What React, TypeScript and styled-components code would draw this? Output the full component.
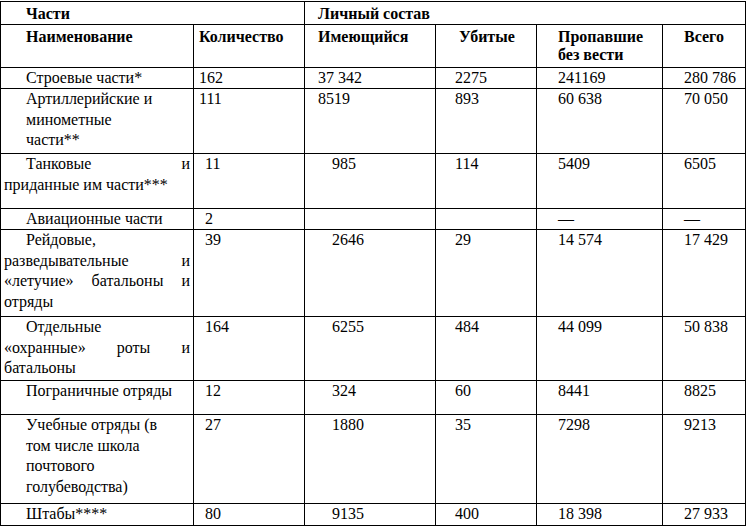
import React from "react";
import styled, { createGlobalStyle } from "styled-components";

type NameCell = {
  lines: string[];
  // "first": only the first line is indented, "all": whole paragraph is indented
  indent: "first" | "all";
  justify?: boolean;
};

type Num = { v: string; indent: number };

type Row = {
  height: number;
  name: NameCell;
  nums: Num[];
};

const n = (v: string, indent: number): Num => ({ v, indent });

// left padding of each numeric column (count, present, killed, missing, total)
const colPad = [5, 13, 19, 2, 21];

const rows: Row[] = [
  {
    height: 20,
    name: { lines: ["Строевые части*"], indent: "all" },
    nums: [n("162", 0), n("37 342", 0), n("2275", 0), n("241169", 19), n("280 786", 0)],
  },
  {
    height: 64,
    name: { lines: ["Артиллерийские и", "минометные", "части**"], indent: "all" },
    nums: [n("111", 0), n("8519", 0), n("893", 0), n("60 638", 19), n("70 050", 0)],
  },
  {
    height: 54,
    name: { lines: ["Танковые и", "приданные им части***"], indent: "first", justify: true },
    nums: [n("11", 6), n("985", 14), n("114", 0), n("5409", 19), n("6505", 0)],
  },
  {
    height: 20,
    name: { lines: ["Авиационные части"], indent: "first" },
    nums: [n("2", 6), n("", 14), n("", 0), n("—", 19), n("—", 0)],
  },
  {
    height: 86,
    name: {
      lines: ["Рейдовые,", "разведывательные и", "«летучие» батальоны и", "отряды"],
      indent: "first",
      justify: true,
    },
    nums: [n("39", 6), n("2646", 14), n("29", 0), n("14 574", 19), n("17 429", 0)],
  },
  {
    height: 63,
    name: {
      lines: ["Отдельные", "«охранные» роты и", "батальоны"],
      indent: "first",
      justify: true,
    },
    nums: [n("164", 6), n("6255", 14), n("484", 0), n("44 099", 19), n("50 838", 0)],
  },
  {
    height: 33,
    name: { lines: ["Пограничные отряды"], indent: "first" },
    nums: [n("12", 6), n("324", 14), n("60", 0), n("8441", 19), n("8825", 0)],
  },
  {
    height: 88,
    name: {
      lines: ["Учебные отряды (в", "том числе школа", "почтового", "голубеводства)"],
      indent: "all",
    },
    nums: [n("27", 6), n("1880", 14), n("35", 0), n("7298", 19), n("9213", 0)],
  },
  {
    height: 21,
    name: { lines: ["Штабы****"], indent: "all" },
    nums: [n("80", 6), n("9135", 14), n("400", 0), n("18 398", 19), n("27 933", 0)],
  },
];

const serif = `"Liberation Serif", "Times New Roman", serif`;

const GlobalStyle = createGlobalStyle`
  html, body {
    margin: 0;
    padding: 0;
    background: #fff;
    font-family: ${serif};
  }
`;

const Page = styled.div`
  padding-top: 1px;
  width: 746px;
`;

// 1px black gaps between white cells draw the table rules
const Grid = styled.div<{ $rows: string }>`
  display: grid;
  grid-template-columns: 192px 110px 130px 100px 125px 82px;
  grid-template-rows: ${(p) => p.$rows};
  gap: 1px;
  padding: 1px;
  width: 746px;
  box-sizing: border-box;
  background: #000;
  font-family: ${serif};
  font-size: 16px;
  color: #000;
`;

const Head = styled.div<{ $span?: number; $pad: number; $indent?: number }>`
  grid-column: span ${(p) => p.$span ?? 1};
  background: #fff;
  padding: 3px 2px 0 ${(p) => p.$pad}px;
  font-weight: bold;
  line-height: 18px;
  text-indent: ${(p) => p.$indent ?? 0}px;
  white-space: nowrap;
`;

const SubLine = styled.span`
  display: block;
`;

const Cell = styled.div<{ $pad: number; $indent: number }>`
  background: #fff;
  padding: 0 2px 0 ${(p) => p.$pad}px;
  line-height: 20.7px;
  text-indent: ${(p) => p.$indent}px;
  white-space: nowrap;
`;

const NameBox = styled.div<{ $all: boolean }>`
  background: #fff;
  padding: 0 3px 0 ${(p) => (p.$all ? 25 : 3)}px;
  line-height: 20.7px;
`;

const Line = styled.span<{ $indent: boolean; $justify: boolean }>`
  display: block;
  white-space: nowrap;
  text-indent: ${(p) => (p.$indent ? 22 : 0)}px;
  text-align: ${(p) => (p.$justify ? "justify" : "left")};
  text-align-last: ${(p) => (p.$justify ? "justify" : "left")};
`;

function Name({ cell }: { cell: NameCell }) {
  return (
    <NameBox $all={cell.indent === "all"}>
      {cell.lines.map((line, i) => (
        <Line
          key={i}
          $indent={cell.indent === "first" && i === 0}
          $justify={!!cell.justify && i < cell.lines.length - 1 && line.includes(" ")}
        >
          {line}
        </Line>
      ))}
    </NameBox>
  );
}

export default function App() {
  const template = ["22px", "42px", ...rows.map((r) => `${r.height}px`)].join(" ");
  return (
    <Page>
      <GlobalStyle />
      <Grid $rows={template}>
        <Head $span={2} $pad={25}>Части</Head>
        <Head $span={4} $pad={colPad[1]}>Личный состав</Head>

        <Head $pad={25}>Наименование</Head>
        <Head $pad={colPad[0]}>Количество</Head>
        <Head $pad={colPad[1]}>Имеющийся</Head>
        <Head $pad={colPad[2]} $indent={4}>Убитые</Head>
        <Head $pad={colPad[3]} $indent={19}>
          Пропавшие
          <SubLine>без вести</SubLine>
        </Head>
        <Head $pad={colPad[4]}>Всего</Head>

        {rows.map((r, i) => (
          <React.Fragment key={i}>
            <Name cell={r.name} />
            {r.nums.map((c, j) => (
              <Cell key={j} $pad={colPad[j]} $indent={c.indent}>
                {c.v}
              </Cell>
            ))}
          </React.Fragment>
        ))}
      </Grid>
    </Page>
  );
}
